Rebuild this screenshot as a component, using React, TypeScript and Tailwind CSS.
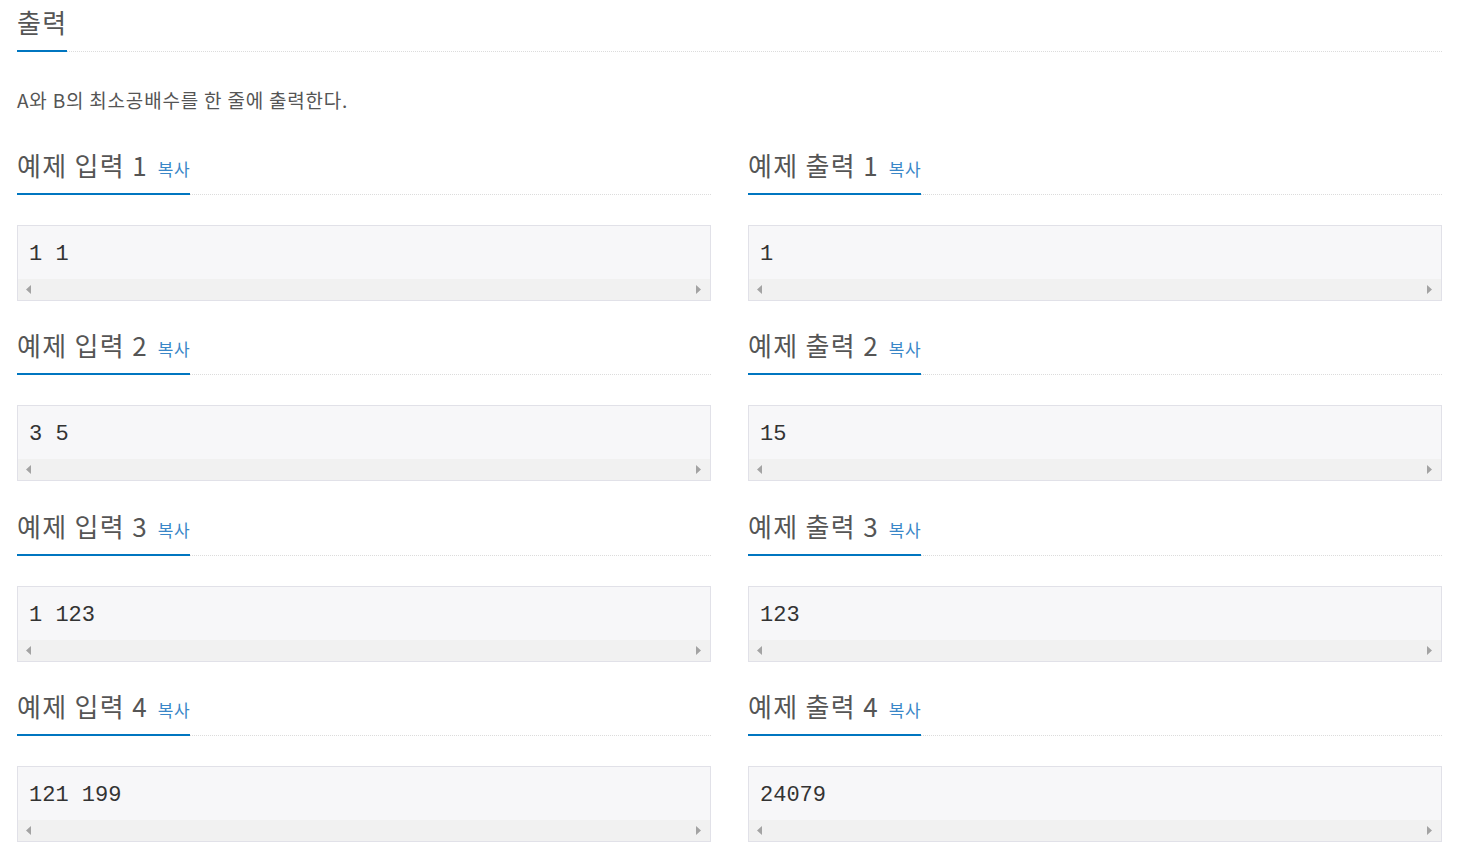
import React from "react";

const samples = [
  { n: 1, input: "1 1", output: "1" },
  { n: 2, input: "3 5", output: "15" },
  { n: 3, input: "1 123", output: "123" },
  { n: 4, input: "121 199", output: "24079" },
];

const sans = "font-['Noto_Sans_CJK_KR','Open_Sans',sans-serif]";

function Headline({ title, copy }: { title: string; copy?: boolean }) {
  return (
    <div className="flex border-b border-dotted border-[#dcdcdc]">
      <h2
        className={`${sans} -mb-px h-[45px] border-b-2 border-[#0076c0] pb-[13px] text-[26px] font-normal leading-[30px] tracking-[1.3px] text-[#555]`}
      >
        {title}
        {copy && (
          <span className="ml-[10px] align-baseline text-[17px] leading-[30px] tracking-[0.5px] text-[#3a87c8]">
            복사
          </span>
        )}
      </h2>
    </div>
  );
}

// fake classic horizontal scrollbar under each sample box
function ScrollBar() {
  return (
    <div className="flex h-[21px] items-center justify-between bg-[#f1f1f1] pl-[8px] pr-[9px]">
      <svg width="5" height="9" viewBox="0 0 5 9">
        <path d="M5 0 L0 4.5 L5 9 Z" fill="#a3a3a3" />
      </svg>
      <svg width="5" height="9" viewBox="0 0 5 9">
        <path d="M0 0 L5 4.5 L0 9 Z" fill="#a3a3a3" />
      </svg>
    </div>
  );
}

function Sample({ title, data }: { title: string; data: string }) {
  return (
    <section className="mb-[29.33px]">
      <Headline title={title} copy />
      <div className="mt-[30px] border border-[#e1e1e8] bg-[#f7f7f9]">
        <pre className="h-[53px] px-[11px] pt-[14px] font-['Liberation_Mono',monospace] text-[22px] leading-[30px] text-[#333]">
          {data}
        </pre>
        <ScrollBar />
      </div>
    </section>
  );
}

export default function App() {
  return (
    <div className="min-h-screen bg-white pl-[17px] pr-[24px] pt-[7px]">
      <Headline title="출력" />
      <p
        className={`${sans} mt-[34px] text-[19px] leading-[28px] tracking-[0.8px] text-[#555]`}
      >
        A와 B의 최소공배수를 한 줄에 출력한다.
      </p>
      <div className="mt-[36px] grid grid-cols-2 gap-x-[37px]">
        {samples.map((s) => (
          <React.Fragment key={s.n}>
            <Sample title={`예제 입력 ${s.n}`} data={s.input} />
            <Sample title={`예제 출력 ${s.n}`} data={s.output} />
          </React.Fragment>
        ))}
      </div>
    </div>
  );
}
